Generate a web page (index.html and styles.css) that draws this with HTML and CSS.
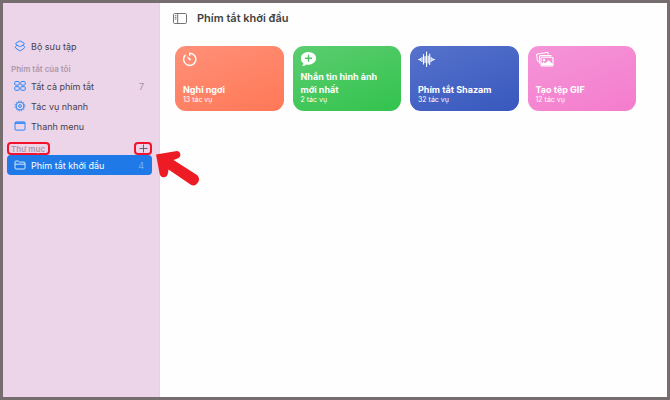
FILE: index.html
```html
<!DOCTYPE html>
<html lang="vi">
<head>
    <meta charset="UTF-8">
    <meta name="viewport" content="width=device-width, initial-scale=1.0">
    <title>Phím tắt</title>
    <link rel="stylesheet" href="styles.css">
</head>
<body>
    <div class="window">
        <aside class="sidebar">
            <nav>
                <a class="item" href="#">
                    <svg class="icon" viewBox="0 0 12 12">
                        <path d="M5.3 1.2Q6 .8 6.700 1.200L9.900 3Q10.800 3.800 9.900 4.600L6.700 6.400Q6 6.800 5.300 6.400L2.100 4.600Q1.200 3.800 2.100 3Z"/>
                        <path d="M2.700 5.200 1.700 6.500Q1 7.400 1.800 8.200L5.300 10.600Q6 11 6.700 10.600L10.200 8.200Q11 7.400 10.300 6.500L9.300 5.200"/>
                    </svg>
                    <span class="label">Bộ sưu tập</span>
                </a>
                <h2 class="heading">Phím tắt của tôi</h2>
                <a class="item" href="#">
                    <svg class="icon" viewBox="0 0 12 12">
                        <rect x=".8" y="1.5" width="4.400" height="3.600" rx=".8"/>
                        <rect x="6.800" y="1.500" width="4.400" height="3.600" rx=".8"/>
                        <rect x=".8" y="6.700" width="4.400" height="3.600" rx=".8"/>
                        <rect x="6.800" y="6.700" width="4.400" height="3.600" rx=".8"/>
                    </svg>
                    <span class="label">Tất cả phím tắt</span>
                    <span class="count">7</span>
                </a>
                <a class="item" href="#">
                    <svg class="icon" viewBox="0 0 12 12">
                        <circle cx="6" cy="6" r="3.900"/>
                        <circle cx="6" cy="6" r="4.900" stroke-dasharray="1.300 1.266"/>
                        <circle cx="6" cy="6" r="1.400"/>
                    </svg>
                    <span class="label">Tác vụ nhanh</span>
                </a>
                <a class="item" href="#">
                    <svg class="icon" viewBox="0 0 12 12">
                        <rect x="1" y="1.900" width="10" height="8.200" rx="1"/>
                        <path d="M1 3.100h10" stroke-width="1.600"/>
                    </svg>
                    <span class="label">Thanh menu</span>
                </a>
                <div class="folder-bar">
                    <h2 class="mark mark-title">Thư mục</h2>
                    <button class="mark mark-add" type="button" aria-label="Thêm thư mục">
                        <svg class="plus" viewBox="0 0 9 9"><path d="M4.500 .5v8M.5 4.500h8"/></svg>
                    </button>
                    <svg class="arrow" viewBox="0 0 44 37">
                        <path d="M1 4.500 20.500 1.200Q24.500 .6 25.300 4Q25.800 7.500 22 8.800L18.500 10 42 25Q45.500 28.200 43 32.500Q40 37 35.500 34.500L13.500 19.500 13 23Q12 27.500 8.500 27.300Q5 27 4.500 23Z"/>
                    </svg>
                </div>
                <a class="item active" href="#">
                    <svg class="icon" viewBox="0 0 12 12">
                        <path d="M1 9V2.900Q1 2 1.900 2H4.200L5.300 3.100H10.100Q11 3.100 11 4V9.100Q11 10 10.100 10H1.900Q1 10 1 9ZM1 5.200H11"/>
                    </svg>
                    <span class="label">Phím tắt khởi đầu</span>
                    <span class="count">4</span>
                </a>
            </nav>
        </aside>
        <main class="content">
            <header class="toolbar">
                <button class="toggle" type="button" aria-label="Ẩn thanh bên">
                    <svg class="toggle-icon" viewBox="0 0 14 11">
                        <rect x=".5" y=".5" width="13" height="10" rx="1.200"/>
                        <path d="M4.700 .5v10M1.800 2.700h1.600M1.800 4.400h1.600M1.800 6.100h1.600"/>
                    </svg>
                </button>
                <h1 class="title">Phím tắt khởi đầu</h1>
            </header>
            <section class="cards">
                <article class="card orange">
                    <svg class="card-icon" viewBox="0 0 18 16">
                        <path class="line" d="M6.700 4.300V2.200A6.100 6.100 0 1 1 2.200 4.200"/>
                        <path d="M3.500 4.900 7.700 7.700Q8.300 8.600 7.500 9.300Q6.600 9.800 6 9.100Z"/>
                    </svg>
                    <h3>Nghỉ ngơi</h3>
                    <p>13 tác vụ</p>
                </article>
                <article class="card green">
                    <svg class="card-icon" viewBox="1 0 18 16">
                        <path d="M8.400 1C4.100 1 .7 3.800 .7 7.300C.7 9.400 1.800 11.100 3.400 12.200Q3.300 14 2 15Q4.700 15.100 6.300 13.500Q7.300 13.700 8.400 13.700C12.700 13.700 16.200 10.800 16.200 7.300C16.200 3.800 12.700 1 8.400 1Z"/>
                        <path class="line green-line" d="M8.500 4.300v6M5.500 7.300h6"/>
                    </svg>
                    <h3>Nhắn tin hình ảnh mới nhất</h3>
                    <p>2 tác vụ</p>
                </article>
                <article class="card blue">
                    <svg class="card-icon" viewBox="0 0 18 16">
                        <path class="line wave" d="M.6 8.500h1M2.300 7.500v2M3.900 6.500v4M5.500 3.500v9.500M7.100 5.500v6M8.600 1v14.500M10.200 5v7M11.700 3v10.500M13.200 6.500v4M14.800 7.500v2M15.400 8.500h1"/>
                    </svg>
                    <h3>Phím tắt Shazam</h3>
                    <p>32 tác vụ</p>
                </article>
                <article class="card pink">
                    <svg class="card-icon" viewBox="0 0 18 16">
                        <path class="line thin" d="M2.600 10.500Q1.600 10.500 1.400 9.500L.7 4.300Q.6 3.200 1.600 3L11 1.500Q12.100 1.400 12.300 2.500V3M3.500 12V5.700Q3.500 4.600 4.600 4.600H15"/>
                        <rect class="line thin" x="5" y="6.200" width="12" height="8.800" rx="1.300"/>
                        <circle cx="8" cy="9" r="1.200"/>
                        <path d="M5 14.500V12.800L7.500 11 9.300 12.300 12.500 9.300 17 13V14.500Z"/>
                    </svg>
                    <h3>Tạo tệp GIF</h3>
                    <p>12 tác vụ</p>
                </article>
            </section>
        </main>
    </div>
</body>
</html>
```

FILE: styles.css
```css
* {
    box-sizing: border-box;
}

body {
    margin: 0;
    font-family: Inter, "Noto Sans", sans-serif;
    color: #47404a;
}

h1,
h2,
h3,
p {
    margin: 0;
}

button {
    padding: 0;
    border: none;
    background: none;
    cursor: pointer;
}

.window {
    display: flex;
    min-height: 100vh;
    border: 3px solid #766e6e;
    background-color: #fefefe;
}

/* Sidebar */
.sidebar {
    flex: 0 0 157px;
    padding: 33px 7px 0 4px;
    border-right: 1px solid #e2d3e1;
    background-color: #ecd5e9;
}

.item {
    display: flex;
    align-items: center;
    gap: 5px;
    height: 20px;
    padding: 0 8px 0 7px;
    border-radius: 4px;
    font-size: 9px;
    color: #47404a;
    text-decoration: none;
}

.icon {
    width: 12px;
    height: 12px;
    fill: none;
    stroke: #2b87f8;
    stroke-width: 1;
    stroke-linejoin: round;
}

.label {
    flex: 1;
}

.count {
    color: #a18fa1;
}

.heading {
    height: 20px;
    padding: 6px 0 0 4px;
    font-size: 8px;
    line-height: 14px;
    font-weight: 600;
    color: #ac98aa;
}

.folder-bar {
    position: relative;
    display: flex;
    align-items: flex-end;
    justify-content: space-between;
    height: 19px;
}

.mark {
    height: 13px;
    border: 2px solid #f3122c;
    border-radius: 4px;
}

.mark-title {
    padding: 0 3px 0 2px;
    font-size: 8px;
    line-height: 10px;
    font-weight: 600;
    color: #ac98aa;
}

.mark-add {
    display: flex;
    align-items: center;
    justify-content: center;
    width: 18px;
}

.plus {
    width: 9px;
    height: 9px;
    stroke: #6b5f6b;
}

.arrow {
    position: absolute;
    top: 14px;
    left: 148px;
    width: 44px;
    height: 37px;
    fill: #ed1c24;
}

.active {
    background-color: #1f7ae8;
    color: #ffffff;
}

.active .icon {
    stroke: #d5e8ff;
}

.active .count {
    color: #74aff5;
}

/* Content */
.content {
    flex: 1;
    padding: 0 31px 0 13px;
}

.toolbar {
    display: flex;
    align-items: center;
    gap: 10px;
    height: 30px;
}

.toggle {
    display: flex;
}

.toggle-icon {
    width: 14px;
    height: 11px;
    fill: none;
    stroke: #747474;
}

.title {
    font-size: 11px;
    font-weight: 600;
    color: #424242;
}

.cards {
    display: grid;
    grid-template-columns: repeat(4, 1fr);
    gap: 9px;
    padding: 13px 0 0 2px;
}

.card {
    display: flex;
    flex-direction: column;
    min-height: 65px;
    padding: 5px 8px 7px;
    border-radius: 11px;
    color: #ffffff;
}

.card-icon {
    width: 18px;
    height: 16px;
    margin-bottom: auto;
    fill: #ffffff;
}

.card h3 {
    font-size: 9px;
    line-height: 13px;
    font-weight: 700;
}

.card p {
    font-size: 7px;
    line-height: 8px;
}

.line {
    fill: none;
    stroke: #ffffff;
    stroke-width: 1.4;
    stroke-linecap: round;
}

.green-line {
    stroke: #4bc763;
}

.wave,
.thin {
    stroke-width: 1.1;
}

.orange {
    background: linear-gradient(160deg, #ff9078, #ff7857);
}

.green {
    background: linear-gradient(160deg, #5ccd70, #32c34d);
}

.blue {
    background: linear-gradient(160deg, #5672cb, #3858be);
}

.pink {
    background: linear-gradient(160deg, #f595d8, #f47ccd);
}
```
